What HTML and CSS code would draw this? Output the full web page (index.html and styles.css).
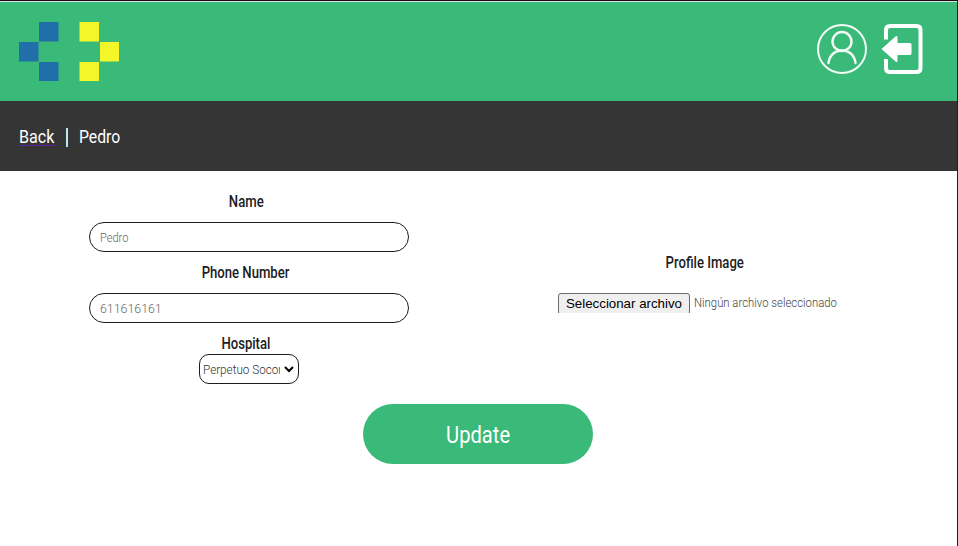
FILE: index.html
```
<!DOCTYPE html>
<html lang="en">
<head>
<meta charset="utf-8">
<title>Pedro</title>
<link rel="stylesheet" href="styles.css">
</head>
<body>
<header class="header">
  <svg class="logo" width="100" height="60" viewBox="0 0 100 60" aria-label="Logo">
    <path fill="#206fa9" d="M20 0h19.5v19.5H20zM0 20h19.5v19.5H0zM20 40h19.5v19H20z"/>
    <path fill="#f5f628" d="M60.5 0H80v19.5H60.5zM81 20h19v19.5H81zM60.5 40H80v19H60.5z"/>
  </svg>
  <nav class="actions">
    <svg width="50" height="50" viewBox="0 0 50 50" fill="none" stroke="#f2fbf6" stroke-width="2">
      <circle cx="25" cy="25" r="24"/>
      <circle cx="25" cy="17.5" r="9.5" stroke-width="2.4"/>
      <path d="M11.5 39C12.5 31 18 26.500 25 26.500S37.500 31 38.500 39" stroke-width="2.4" stroke-linecap="round"/>
    </svg>
    <svg width="42" height="50" viewBox="0 0 42 50">
      <path fill="none" stroke="#fff" stroke-width="4" d="M5 15.500V6q0-4 4-4H35.500q4 0 4 4V44q0 4-4 4H9q-4 0-4-4V35"/>
      <path fill="#fff" d="M.5 25 14.500 12.500Q16.500 11 16.500 13.500V19H29q1.500 0 1.500 1.500v9Q30.500 31 29 31H16.500v5.500q0 2.500-2 1z"/>
    </svg>
  </nav>
</header>
<div class="crumbs">
  <a class="back" href="#"><span class="narrow">Back</span></a>
  <span class="divider"></span>
  <span class="narrow current">Pedro</span>
</div>
<main class="form">
  <div class="columns">
    <section class="fields">
      <div class="label"><span class="narrow">Name</span></div>
      <div class="field"><span class="narrow">Pedro</span></div>
      <div class="label"><span class="narrow">Phone Number</span></div>
      <div class="field"><span class="narrow digits">611616161</span></div>
      <div class="label hospital"><span class="narrow">Hospital</span></div>
      <div class="select">
        <span class="clip"><span class="narrow">Perpetuo Socorro</span></span>
        <svg width="10" height="7" viewBox="0 0 10 7"><path d="M1 1l4 4 4-4" fill="none" stroke="#000" stroke-width="2"/></svg>
      </div>
    </section>
    <section class="upload">
      <div class="label"><span class="narrow">Profile Image</span></div>
      <div class="file">
        <span class="choose">Seleccionar archivo</span>
        <span class="narrow status">Ningún archivo seleccionado</span>
      </div>
    </section>
  </div>
  <button class="update"><span class="narrow">Update</span></button>
</main>
</body>
</html>
```
FILE: styles.css
```
* { box-sizing: border-box; }
body {
  margin: 0;
  width: 958px;
  height: 546px;
  overflow: hidden;
  border-top: 1px solid #1b0718;
  border-right: 1px solid #202020;
  background: #fff;
  font-family: Roboto, "Liberation Sans", sans-serif;
  color: #1c1c1c;
}
.header {
  height: 100px;
  border-top: 1px solid #d6e5dd;
  background: #39ba78;
  display: flex;
  justify-content: space-between;
  align-items: center;
  padding: 0 34px 0 19px;
}
.logo { display: block; }
.actions { display: flex; gap: 14px; margin-top: -5px; }
.narrow {
  display: inline-block;
  white-space: nowrap;
  transform: scaleX(.83);
}
.crumbs {
  height: 70px;
  background: #353535;
  color: #fff;
  display: flex;
  align-items: center;
  padding: 2px 19px 0;
  font-size: 19px;
  font-weight: 400;
}
.crumbs .narrow { transform-origin: left; }
.crumbs .current { margin-top: -2px; }
.back {
  width: 36px;
  height: 18px;
  line-height: 18px;
  border-bottom: 1px solid #5f1fa6;
  color: #fff;
  text-decoration: none;
}
.back .narrow { transform: scaleX(.85); }
.divider { width: 2px; height: 19px; margin: 0 11px 0 11px; background: #bfe3f7; }
.columns { display: flex; height: 233px; }
.fields {
  width: 498px;
  padding-top: 16px;
  display: flex;
  flex-direction: column;
  align-items: center;
}
.label {
  height: 30px;
  line-height: 30px;
  margin-right: 6px;
  font-size: 16px;
  font-weight: 500;
}
.label .narrow { transform: scaleX(.82); }
.field {
  width: 320px;
  height: 30px;
  margin: 5px 0 6px;
  border: 1px solid #1c1c1c;
  border-radius: 15px;
  padding-left: 9.5px;
  line-height: 30px;
  font-size: 13.3px;
  font-weight: 300;
  color: #666;
}
.field .narrow { transform-origin: left; }
.field .digits { transform: scaleX(.93); }
.hospital { height: 25px; }
.select {
  width: 100px;
  height: 30px;
  border: 1px solid #1c1c1c;
  border-radius: 10px;
  padding: 0 4px 0 3px;
  display: flex;
  align-items: center;
  justify-content: space-between;
  font-size: 13.3px;
  font-weight: 300;
  color: #333;
}
.clip { width: 77px; overflow: hidden; }
.clip .narrow { transform: scaleX(.88); transform-origin: left; }
.upload { width: 420px; padding-top: 77px; text-align: center; }
.file {
  display: flex;
  height: 20px;
  margin: 15px 0 0 60px;
  overflow: hidden;
  line-height: 20px;
  font-size: 13.3px;
  font-weight: 300;
  color: #444;
}
.choose {
  flex: none;
  width: 132px;
  height: 22px;
  border: 1px solid #6b6b6b;
  border-radius: 3px;
  background: #efefef;
  color: #000;
  font-family: "Liberation Sans", sans-serif;
  font-weight: 400;
}
.status { margin-left: 4px; transform: scaleX(.853); transform-origin: left; }
.update {
  display: block;
  width: 230px;
  height: 60px;
  margin: 0 0 0 363px;
  border: 0;
  border-radius: 30px;
  padding: 2px 0 0;
  background: #39ba78;
  color: #fff;
  font-family: inherit;
  font-size: 24px;
  font-weight: 400;
}
.update .narrow { transform: scaleX(.84); }
```
